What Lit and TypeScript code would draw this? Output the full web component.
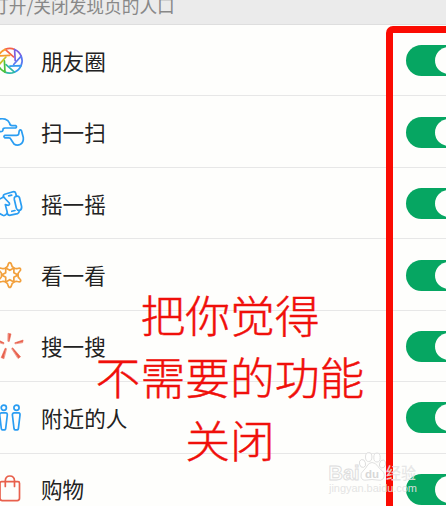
import { LitElement, html, svg, css } from "lit";
import { customElement } from "lit/decorators.js";

const BLADES = ["#f5604a", "#7a5fe0", "#5b78f0", "#359bf0", "#2fb8a8", "#4cc23c", "#c8c028", "#f79a2c"];

// Eight-blade aperture: every blade owns an arc of the rim and one inward edge.
const aperture = () => {
  const cx = 9.8, cy = 17.8, r = 12.3, inner = 5.4;
  const at = (deg: number, rad: number) => {
    const a = ((deg - 90) * Math.PI) / 180;
    return `${(cx + rad * Math.cos(a)).toFixed(2)} ${(cy + rad * Math.sin(a)).toFixed(2)}`;
  };
  return svg`${BLADES.map((c, i) => {
    const a = i * 45 - 22;
    return svg`<path stroke=${c} d="M${at(a + 45, r)} A${r} ${r} 0 0 0 ${at(a, r)} L${at(a + 66, inner)}"/>`;
  })}`;
};

const ICONS: Record<string, () => unknown> = {
  moments: aperture,
  scan: () => svg`<g stroke="#2a9df2">
    <path d="M-2 5.500 C3 3.800 8 5 9.500 9 Q10 11.500 12 11.600 H15.500 Q17.300 12.600 15.800 14 H5 Q2.800 14.200 3 15.600 Q3.200 17.500 .500 17.700 H-2"/>
    <path d="M5 21.300 H16.500 Q18.700 21.300 18.800 19.500 L19.200 16.800 Q20.300 14.800 21.500 16.800 L23.300 23.500 Q23.800 28 20.500 30.300 Q17 32.300 14 30 L11 25.500 Q10.500 24 9 23.900 H5 Q2.800 22.600 5 21.300"/>
  </g>`,
  shake: () => svg`<g stroke="#2a9df2">
    <path d="M3.500 11 L3.300 10 Q3.200 8.700 4.700 8.200 L13 5.800 Q15.200 5.400 15.700 7.300 L16.400 10"/>
    <path d="M7.200 27.300 Q8.200 29.700 10.500 29.200 L17.500 27.600 Q19.300 27 19.200 24.700"/>
    <path d="M15.300 10.600 Q18.500 9.300 19.500 11.700 L21.600 20.500 Q22 23.300 19.700 24.400 Q17.300 24.800 16.400 22.300 L14.300 13.500 Q13.900 11.300 15.300 10.600Z"/>
    <path d="M-2 14 L3 11.200 Q4.500 11 5 12.500 L9.300 17 Q10 19 8 19.300 L5.300 18.600 L7.300 26.500 Q5.500 30.300 2.800 29.300 L-2 26.500"/>
    <path d="M8.700 9.900 L11.700 9.100 M11.800 25.300 L15 24.500"/>
  </g>`,
  look: () => svg`<g stroke="#f2a03c">
    ${[0, 60, 120, 180, 240, 300].map(
      (a) => svg`<path transform="rotate(${a} 9.8 18)" d="M5.700 10.900 L9.800 13.300 L13.900 10.900 M6.100 10.600 Q7.700 9.800 8 8 Q8.500 5.600 9.800 5.600 Q11.100 5.600 11.600 8 Q11.900 9.800 13.500 10.600"/>`
    )}
  </g>`,
  search: () => svg`<g fill="#e8604c" stroke="#e8604c" stroke-width=".6">
    <path d="M8.400 5.400 L11 5.900 L9.200 13.500 L8.200 13.300 Z"/>
    <path d="M22.700 14.300 L23.100 12 L14.800 14.800 L15 15.500 Z"/>
    <path d="M18.300 30.300 L20.500 28.800 L12.600 19.800 L11.900 20.400 Z"/>
    <path d="M3.600 30.600 L1.200 29.600 L5.200 20.200 L6.200 20.600 Z"/>
    <path d="M-3 13.500 L-2.800 11.500 L4 14.800 L3.700 15.700 Z"/>
  </g>`,
  nearby: () => svg`<g stroke="#2a9df2">
    <circle cx="3.800" cy="7.800" r="2.600"/><circle cx="16.500" cy="7.800" r="2.600"/>
    <path d="M1.500 12.800 H6 Q7.500 13 7.300 15 L5.700 28.500 Q5.500 29.800 4.800 29.800 H2.300 Q1.500 29.800 1.300 28.500 L-.300 15 Q-.500 13 1.500 12.800"/>
    <path d="M14.200 12.800 H18.700 Q20.200 13 20 15 L18.400 28.500 Q18.200 29.800 17.500 29.800 H15 Q14.200 29.800 14 28.500 L12.400 15 Q12.200 13 14.200 12.800"/>
  </g>`,
  shop: () => svg`<g stroke="#e8604c">
    <path d="M1.500 10.700 H18 Q19.500 10.700 19.500 12.200 V27.300 Q19.500 29.600 17.200 29.600 H2.300 Q0 29.600 0 27.300 V12.200 Q0 10.700 1.500 10.700Z"/>
    <path d="M5.300 15.500 V9.700 Q5.500 5 9.900 5 Q14.300 5 14.500 9.700 V15.500"/>
  </g>`,
};

const ROWS = [
  ["moments", "朋友圈"],
  ["scan", "扫一扫"],
  ["shake", "摇一摇"],
  ["look", "看一看"],
  ["search", "搜一搜"],
  ["nearby", "附近的人"],
  ["shop", "购物"],
];

@customElement("app-root")
export class AppRoot extends LitElement {
  static styles = css`
    :host {
      display: block;
      position: relative;
      width: 446px;
      height: 506px;
      overflow: hidden;
      background: #fefefc;
      color: #222;
      font-family: "Noto Sans CJK SC", sans-serif;
    }
    .head {
      box-sizing: border-box;
      height: 25px;
      background: #ebebeb;
      border-bottom: 1px solid #dedede;
      overflow: hidden;
      color: #888;
      font-size: 17.7px;
      line-height: 26px;
      white-space: nowrap;
    }
    .head span {
      display: block;
      margin: -8px 0 0 -9px;
    }
    .row {
      box-sizing: border-box;
      height: 71.45px;
      padding-top: 1px;
      display: flex;
      align-items: center;
      border-bottom: 1.4px solid #e7e7e7;
    }
    .icon {
      flex: none;
      width: 41px;
      height: 36px;
      fill: none;
      stroke-width: 1.7;
      stroke-linejoin: round;
      stroke-linecap: round;
    }
    .label {
      flex: 1;
      font-size: 21.6px;
      line-height: 32px;
    }
    .switch {
      box-sizing: border-box;
      flex: none;
      width: 58px;
      height: 31px;
      margin-right: -18px;
      padding: 2px;
      border-radius: 16px;
      background: #06a662;
      display: flex;
      justify-content: flex-end;
    }
    .knob {
      width: 27px;
      height: 27px;
      border-radius: 50%;
      background: #fefefc;
    }
    .frame {
      position: absolute;
      left: 386px;
      top: 26px;
      width: 80px;
      height: 500px;
      border: 7.5px solid #fb0b02;
      border-radius: 7px;
    }
    .note {
      position: absolute;
      left: 80px;
      top: 282.5px;
      width: 300px;
      text-align: center;
      color: #f00f0a;
      -webkit-text-stroke: 0.45px #f00f0a;
      font-size: 44.8px;
      font-weight: 300;
      line-height: 62.6px;
      white-space: nowrap;
    }
    .mark {
      position: absolute;
      left: 326px;
      top: 448px;
      width: 100px;
      height: 50px;
      overflow: visible;
      font-family: "Liberation Sans", sans-serif;
    }
    .outline {
      fill: #fff;
      fill-opacity: 0.6;
      stroke: #dcdcdc;
      stroke-width: 0.9;
    }
    .url {
      fill: #e2e2e2;
      fill-opacity: 0.95;
      stroke: none;
    }
    .cjk {
      font-family: "Noto Sans CJK SC", sans-serif;
      font-weight: 500;
      fill: #e4e4e4;
      fill-opacity: 0.9;
      stroke: none;
    }
    .du {
      fill: #d8d8d8;
      fill-opacity: 1;
      stroke: none;
    }
  `;

  render() {
    return html`
      <div class="head"><span>打开/关闭发现页的人口</span></div>
      ${ROWS.map(
        ([icon, label]) => html`<div class="row">
          <svg class="icon" viewBox="0 0 41 36">${ICONS[icon]()}</svg>
          <span class="label">${label}</span>
          <span class="switch"><span class="knob"></span></span>
        </div>`
      )}
      <div class="frame"></div>
      <div class="note">把你觉得<br />不需要的功能<br />关闭</div>
      <svg class="mark" viewBox="0 0 100 50">
        <g class="outline">
          <ellipse cx="36.500" cy="15.500" rx="3" ry="4" transform="rotate(-15 36.500 15.500)" />
          <ellipse cx="42.700" cy="9" rx="3.200" ry="4.500" />
          <ellipse cx="51" cy="9.500" rx="3.200" ry="4.500" />
          <ellipse cx="56.500" cy="16" rx="3" ry="4" transform="rotate(15 56.500 16)" />
          <path d="M46 14.500 Q49.500 14.500 52 18.500 Q53 20.500 56 22.500 Q60 26.500 57 31 Q55 33 51 32 Q46 31 41 32 Q36 33 35 29 Q34 25 38 22 Q40 20 41 18 Q43 14.500 46 14.500Z" />
          <text x="2.500" y="31.500" font-size="20" font-weight="700" textLength="31" lengthAdjust="spacingAndGlyphs">Bai</text>
          <text class="du" x="39" y="29.500" font-size="11.500" font-weight="700" textLength="14">du</text>
          <text class="cjk" x="60" y="31" font-size="15.500" textLength="30" lengthAdjust="spacingAndGlyphs">经验</text>
          <text class="url" x="3" y="43.500" font-size="11" textLength="88" lengthAdjust="spacing">jingyan.baidu.com</text>
        </g>
      </svg>
    `;
  }
}
